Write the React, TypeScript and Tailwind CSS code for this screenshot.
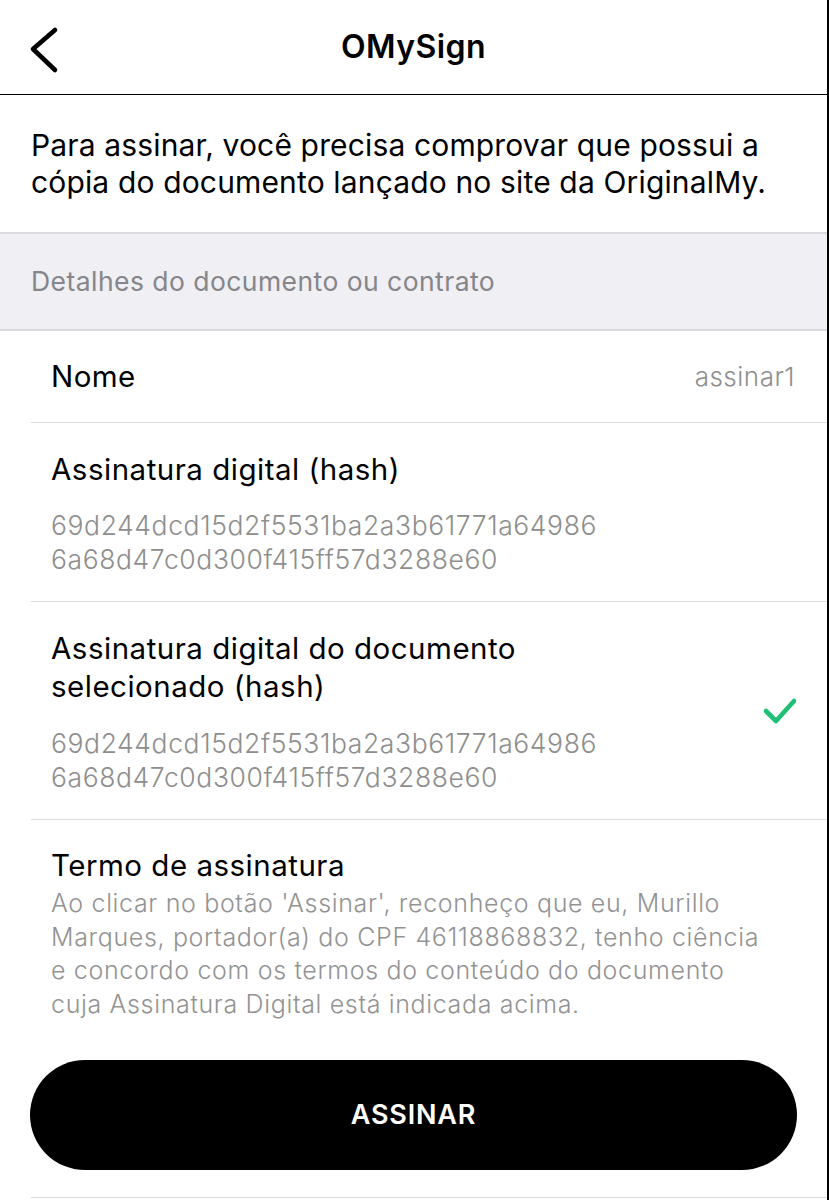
import React from "react";

const font = { fontFamily: "Inter, 'Noto Sans', sans-serif" };

function Row({ children, right }: { children: React.ReactNode; right?: React.ReactNode }) {
  return (
    <div className="ml-[31px] border-b border-[#dcdcdc] pl-[20px] pr-[32px] flex items-center justify-between">
      <div className="flex-1">{children}</div>
      {right}
    </div>
  );
}

function Hash() {
  return (
    <div className="text-[26.5px] leading-[34px] font-light tracking-[0.6px] text-[#8e8e8e] whitespace-nowrap">
      69d244dcd15d2f5531ba2a3b61771a64986
      <br />
      6a68d47c0d300f415ff57d3288e60
    </div>
  );
}

export default function App() {
  return (
    <div className="w-[829px] h-[1200px] bg-white overflow-hidden border-r-2 border-black" style={font}>
      {/* header */}
      <div className="relative h-[95px] border-b-[1.5px] border-black flex items-center justify-center">
        <svg className="absolute left-[28px] top-[24px]" width="34" height="52" viewBox="0 0 34 52" fill="none">
          <polyline points="27,6 5,25 27,46" stroke="black" strokeWidth="4.6" strokeLinecap="round" strokeLinejoin="round" />
        </svg>
        <h1 className="text-[32px] font-semibold tracking-[0.4px] text-black">OMySign</h1>
      </div>

      <p className="px-[31px] pt-[32px] pb-[31px] text-[30px] leading-[37px] tracking-[0.15px] text-black whitespace-nowrap">
        Para assinar, você precisa comprovar que possui a
        <br />
        cópia do documento lançado no site da OriginalMy.
      </p>

      <div className="h-[99px] bg-[#efeff4] border-y-2 border-[#dadade] flex items-center px-[31px]">
        <span className="text-[26.5px] tracking-[0.45px] text-[#85858a]">Detalhes do documento ou contrato</span>
      </div>

      <Row right={<span className="text-[26px] tracking-[0.5px] font-light text-[#8e8e8e]">assinar1</span>}>
        <div className="h-[91px] flex items-center text-[29.5px] tracking-[0.4px] text-black">Nome</div>
      </Row>

      <Row>
        <div className="pt-[28px] pb-[25px]">
          <div className="text-[29.5px] leading-[36px] tracking-[0.5px] text-black">Assinatura digital (hash)</div>
          <div className="mt-[21px]">
            <Hash />
          </div>
        </div>
      </Row>

      <Row
        right={
          <svg width="36" height="30" viewBox="0 0 36 30" fill="none" className="-mr-[3px]">
            <polyline points="4,15 14,25 32,5" stroke="#1fbf76" strokeWidth="4.6" strokeLinecap="round" strokeLinejoin="round" />
          </svg>
        }
      >
        <div className="pt-[27px] pb-[25px]">
          <div className="text-[29.5px] leading-[38px] tracking-[0.5px] text-black whitespace-nowrap">
            Assinatura digital do documento
            <br />
            selecionado (hash)
          </div>
          <div className="mt-[21px]">
            <Hash />
          </div>
        </div>
      </Row>

      <div className="pl-[51px] pr-[20px] pt-[27px]">
        <div className="text-[29.5px] leading-[36px] tracking-[0.5px] text-black">Termo de assinatura</div>
        <p className="mt-[4px] text-[25px] leading-[33.5px] font-light tracking-[0.65px] text-[#939393] whitespace-nowrap">
          Ao clicar no botão 'Assinar', reconheço que eu, Murillo
          <br />
          Marques, portador(a) do CPF 46118868832, tenho ciência
          <br />
          e concordo com os termos do conteúdo do documento
          <br />
          cuja Assinatura Digital está indicada acima.
        </p>
      </div>

      <div className="px-[30px] pt-[39px] pb-[27px]">
        <button className="w-full h-[110px] rounded-full bg-black text-white text-[27px] font-semibold tracking-[0.8px]">
          ASSINAR
        </button>
      </div>
      <div className="ml-[31px] border-b border-[#dcdcdc]" />
    </div>
  );
}
